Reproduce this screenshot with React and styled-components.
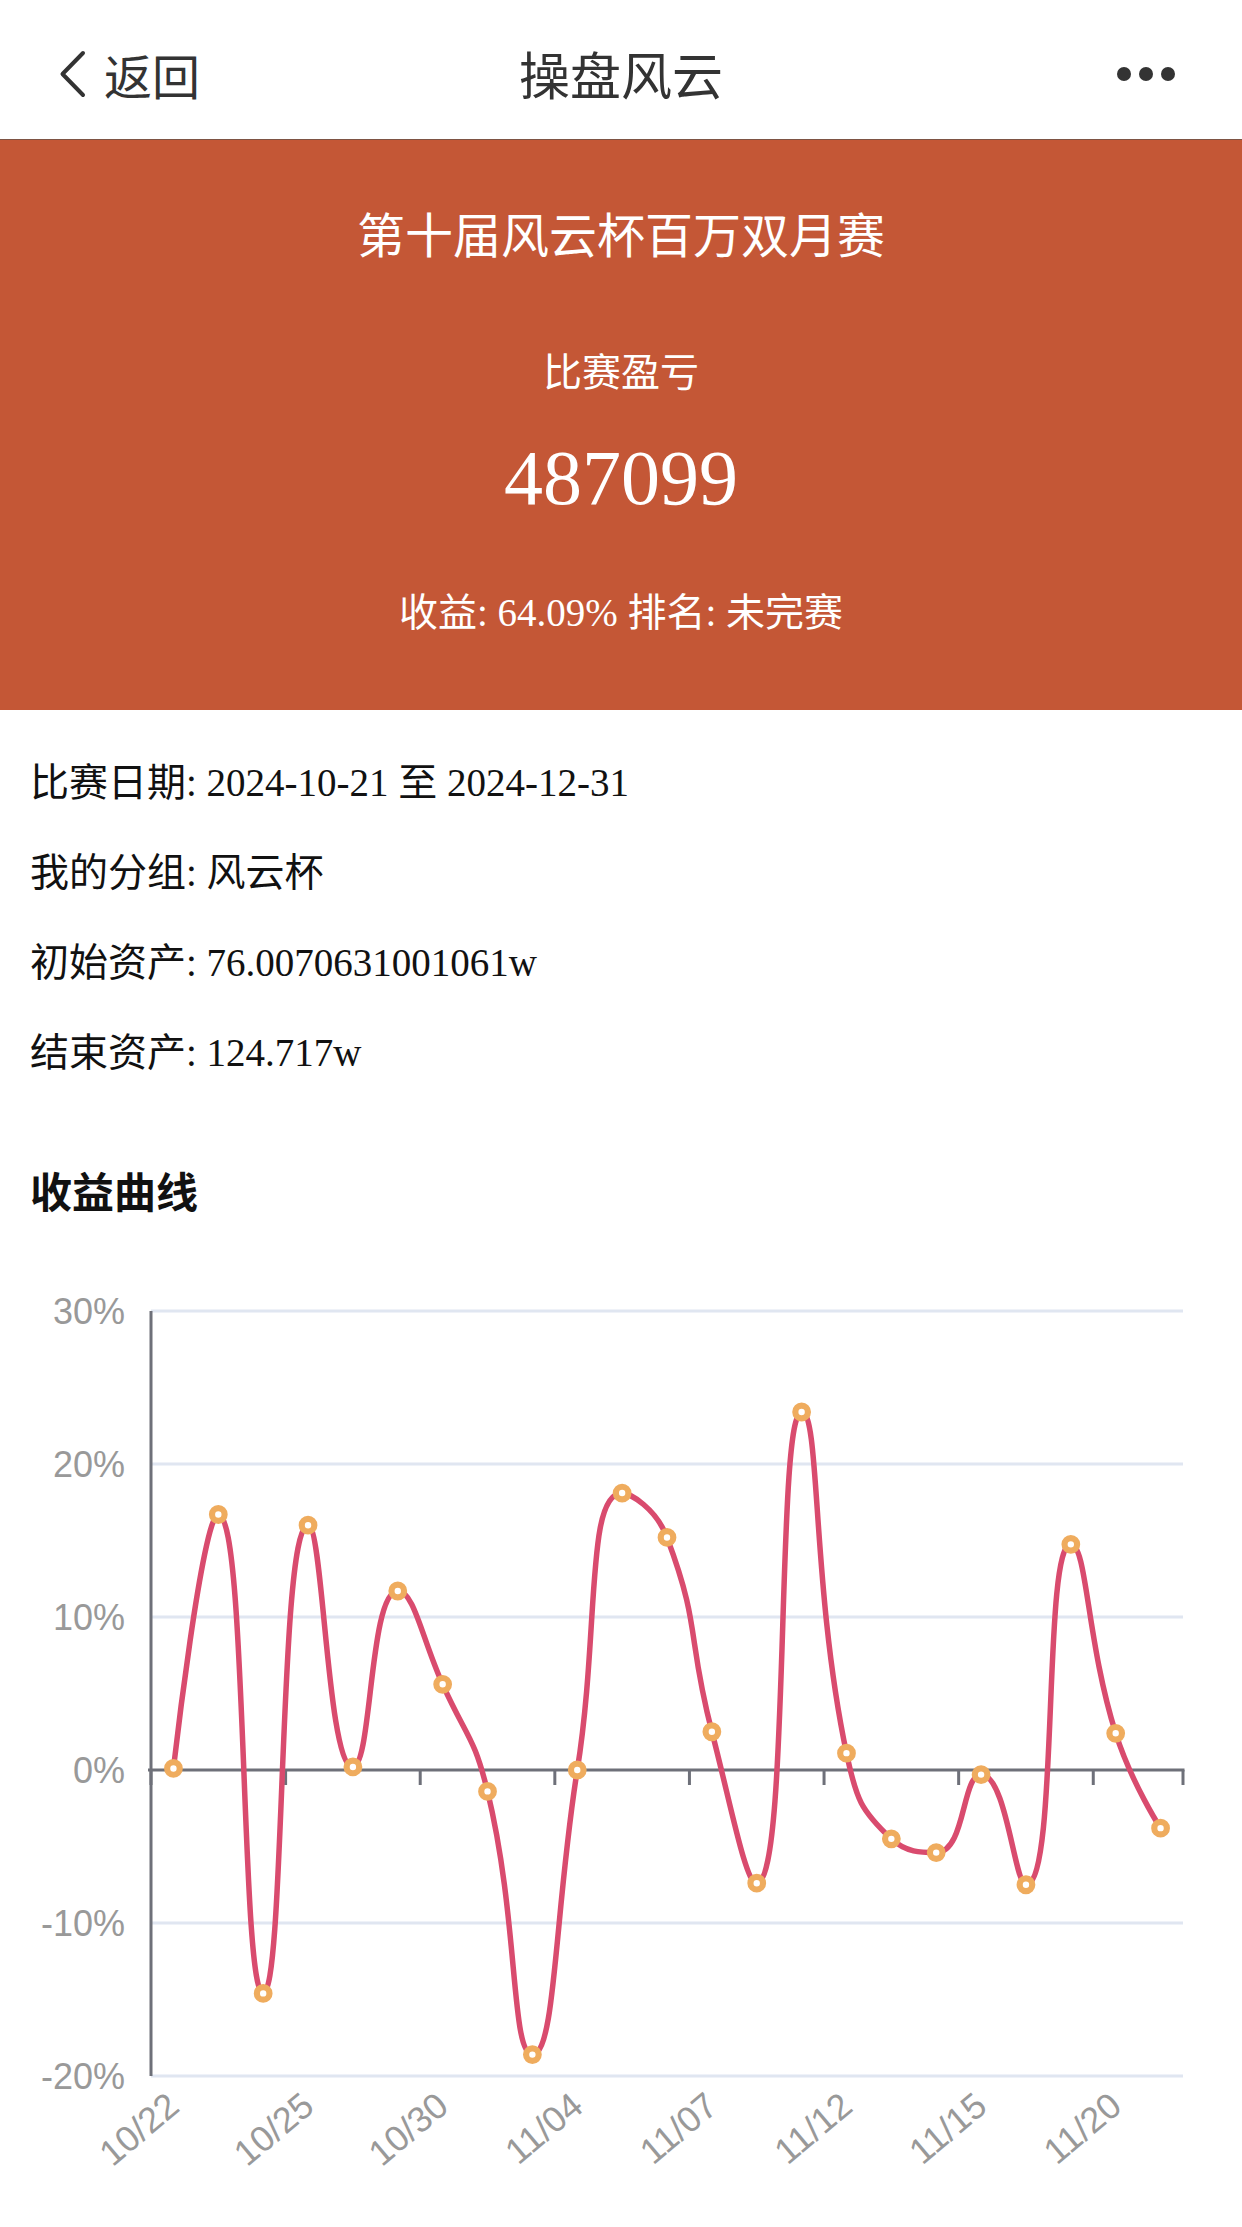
import React from 'react';
import styled, { createGlobalStyle } from 'styled-components';

const GlobalStyle = createGlobalStyle`
  html, body {
    margin: 0;
    padding: 0;
    background: #fff;
  }
  body {
    font-family: "Liberation Serif", "Noto Sans CJK SC", serif;
  }
`;

const Page = styled.div`
  width: 1242px;
  height: 2227px;
  overflow: hidden;
  background: #fff;
`;

const NavBar = styled.header`
  box-sizing: border-box;
  display: grid;
  grid-template-columns: 1fr auto 1fr;
  align-items: center;
  height: 140px;
  padding: 8px 62px 0;
  border-bottom: 1px solid #7e5444;
  font-family: "Noto Sans CJK SC", sans-serif;
  color: #333;
`;

const BackButton = styled.div`
  display: flex;
  align-items: center;
  gap: 18px;
  margin-left: -4px;
  font-size: 48px;
  line-height: 1;

  svg {
    display: block;
  }
`;

const NavTitle = styled.div`
  font-size: 51px;
  line-height: 1;
`;

const MoreDots = styled.div`
  justify-self: end;
  display: flex;
  gap: 8px;
  margin-right: 5px;
`;

const Dot = styled.span`
  width: 14px;
  height: 14px;
  border-radius: 50%;
  background: #333;
`;

const Banner = styled.section`
  background: #c45736;
  color: #fff;
  text-align: center;
  padding: 67px 0 72px;
`;

const BannerTitle = styled.h1`
  margin: 0;
  font-size: 48px;
  line-height: 60px;
  font-weight: 400;
`;

const BannerLabel = styled.div`
  margin-top: 81px;
  font-size: 39px;
  line-height: 50px;
`;

const BannerAmount = styled.div`
  margin-top: 41px;
  font-size: 78px;
  line-height: 78px;
`;

const BannerSummary = styled.div`
  margin-top: 71px;
  font-size: 39px;
  line-height: 50px;
`;

const InfoList = styled.div`
  padding: 28px 30px 0;
  color: #111;
`;

const InfoRow = styled.div`
  font-size: 39px;
  line-height: 90px;
  white-space: nowrap;
`;

const SectionTitle = styled.h2`
  margin: 62px 0 0;
  padding: 0 30px;
  font-family: "Noto Sans CJK SC", sans-serif;
  font-size: 42px;
  line-height: 60px;
  font-weight: 700;
  color: #111;
`;

const ChartBox = styled.div`
  margin-top: 20px;

  svg {
    display: block;
  }
`;

const info = [
  ['比赛日期', '2024-10-21 至 2024-12-31'],
  ['我的分组', '风云杯'],
  ['初始资产', '76.0070631001061w'],
  ['结束资产', '124.717w'],
];

const values = [0.1, 16.7, -14.6, 16.0, 0.2, 11.7, 5.6, -1.4, -18.6, 0.0, 18.1, 15.2, 2.5, -7.4, 23.4, 1.1, -4.5, -5.4, -0.3, -7.5, 14.75, 2.4, -3.8];
const dateLabels = ['10/22', '10/25', '10/30', '11/04', '11/07', '11/12', '11/15', '11/20'];

// chart geometry (svg starts at page y 1240)
const LEFT = 151;
const RIGHT = 1183;
const ZERO_Y = 530;
const STEP = 15.3; // px per 1%
const BAND = (RIGHT - LEFT) / values.length;
const yOf = (v) => ZERO_Y - v * STEP;
const xOf = (i) => LEFT + BAND * (i + 0.5);

// echarts-style smooth line with clamped control points
function smoothPath(pts, smooth = 0.5) {
  let d = '';
  let cpx0, cpy0, prevX, prevY;
  const n = pts.length;
  pts.forEach(([x, y], i) => {
    if (i === 0) {
      d += `M${x.toFixed(2)},${y.toFixed(2)}`;
      cpx0 = x;
      cpy0 = y;
    } else {
      let cpx1 = x;
      let cpy1 = y;
      let nextCpx0 = x;
      let nextCpy0 = y;
      if (i < n - 1) {
        const [nx, ny] = pts[i + 1];
        let vx = nx - prevX;
        let vy = ny - prevY;
        const lenPrev = Math.hypot(x - prevX, y - prevY);
        const lenNext = Math.hypot(nx - x, ny - y);
        const ratio = lenNext / (lenNext + lenPrev);
        nextCpx0 = x + vx * smooth * ratio;
        nextCpy0 = y + vy * smooth * ratio;
        nextCpx0 = Math.max(Math.min(nextCpx0, Math.max(nx, x)), Math.min(nx, x));
        nextCpy0 = Math.max(Math.min(nextCpy0, Math.max(ny, y)), Math.min(ny, y));
        vx = nextCpx0 - x;
        vy = nextCpy0 - y;
        cpx1 = x - (vx * lenPrev) / lenNext;
        cpy1 = y - (vy * lenPrev) / lenNext;
        cpx1 = Math.max(Math.min(cpx1, Math.max(prevX, x)), Math.min(prevX, x));
        cpy1 = Math.max(Math.min(cpy1, Math.max(prevY, y)), Math.min(prevY, y));
        vx = x - cpx1;
        vy = y - cpy1;
        nextCpx0 = x + (vx * lenNext) / lenPrev;
        nextCpy0 = y + (vy * lenNext) / lenPrev;
      }
      d += ` C${cpx0.toFixed(2)},${cpy0.toFixed(2)} ${cpx1.toFixed(2)},${cpy1.toFixed(2)} ${x.toFixed(2)},${y.toFixed(2)}`;
      cpx0 = nextCpx0;
      cpy0 = nextCpy0;
    }
    prevX = x;
    prevY = y;
  });
  return d;
}

function ProfitChart() {
  const pts = values.map((v, i) => [xOf(i), yOf(v)]);
  const levels = [30, 20, 10, 0, -10, -20];
  const ticks = [];
  for (let x = LEFT; x < RIGHT - 5; x += BAND * 3) ticks.push(x);
  ticks.push(RIGHT);

  return (
    <svg width="1242" height="987" viewBox="0 0 1242 987">
      {levels.filter((l) => l !== 0).map((l) => (
        <line key={l} x1={LEFT} x2={RIGHT} y1={yOf(l)} y2={yOf(l)} stroke="#e0e6f1" strokeWidth="3" />
      ))}
      {levels.map((l) => (
        <text
          key={`t${l}`}
          x="125"
          y={yOf(l)}
          textAnchor="end"
          dominantBaseline="central"
          fontFamily="Liberation Sans, Arial, sans-serif"
          fontSize="36"
          fill="#999"
        >
          {l}%
        </text>
      ))}
      <line x1={LEFT} x2={LEFT} y1={yOf(30)} y2={yOf(-20)} stroke="#6e7079" strokeWidth="3" />
      <line x1={LEFT - 3} x2={RIGHT + 1.5} y1={ZERO_Y} y2={ZERO_Y} stroke="#6e7079" strokeWidth="3" />
      {ticks.map((x) => (
        <line key={x} x1={x} x2={x} y1={ZERO_Y} y2={ZERO_Y + 15} stroke="#6e7079" strokeWidth="3" />
      ))}
      {dateLabels.map((label, k) => {
        const ax = xOf(k * 3);
        const ay = yOf(-20) + 24;
        return (
          <text
            key={label}
            x={ax}
            y={ay}
            textAnchor="end"
            dominantBaseline="central"
            transform={`rotate(-40 ${ax} ${ay})`}
            fontFamily="Liberation Sans, Arial, sans-serif"
            fontSize="36"
            fill="#999"
          >
            {label}
          </text>
        );
      })}
      <path d={smoothPath(pts)} fill="none" stroke="#d94b6e" strokeWidth="5.5" strokeLinejoin="round" />
      {pts.map(([x, y], i) => (
        <circle key={i} cx={x} cy={y} r="6.3" fill="#fff" stroke="#efac5e" strokeWidth="6.2" />
      ))}
    </svg>
  );
}

export default function App() {
  return (
    <Page>
      <GlobalStyle />
      <NavBar>
        <BackButton>
          <svg width="28" height="48" viewBox="0 0 28 48">
            <path d="M25 3 L4.5 24 L25 45" fill="none" stroke="#333" strokeWidth="4" strokeLinecap="round" strokeLinejoin="round" />
          </svg>
          <span>返回</span>
        </BackButton>
        <NavTitle>操盘风云</NavTitle>
        <MoreDots>
          <Dot />
          <Dot />
          <Dot />
        </MoreDots>
      </NavBar>

      <Banner>
        <BannerTitle>第十届风云杯百万双月赛</BannerTitle>
        <BannerLabel>比赛盈亏</BannerLabel>
        <BannerAmount>487099</BannerAmount>
        <BannerSummary>收益: 64.09% 排名: 未完赛</BannerSummary>
      </Banner>

      <InfoList>
        {info.map(([k, v]) => (
          <InfoRow key={k}>
            {k}: {v}
          </InfoRow>
        ))}
      </InfoList>

      <SectionTitle>收益曲线</SectionTitle>

      <ChartBox>
        <ProfitChart />
      </ChartBox>
    </Page>
  );
}
